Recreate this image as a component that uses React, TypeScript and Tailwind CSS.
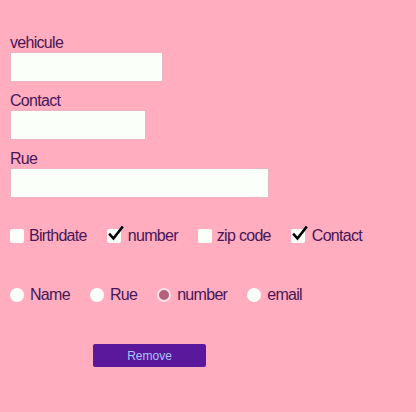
import React from "react";

const Check = () => (
  <svg
    className="absolute left-[1px] top-[-3px]"
    width="16"
    height="16"
    viewBox="0 0 16 16"
    fill="none"
  >
    <path d="M2 8.5 L5.5 12.5 L14 1.5" stroke="#000" strokeWidth="2.6" strokeLinecap="square" />
  </svg>
);

const Box = ({ label, checked }: { label: string; checked?: boolean }) => (
  <label className="flex items-center">
    <span
      className={`relative w-[14px] h-[14px] bg-[#fbfffa] rounded-[2px] ${
        checked ? "mr-[7px]" : "mr-[5px]"
      }`}
    >
      {checked && <Check />}
    </span>
    <span>{label}</span>
  </label>
);

const Radio = ({ label, checked }: { label: string; checked?: boolean }) => (
  <label className="flex items-center">
    <span
      className={`w-[14px] h-[14px] rounded-full mr-[6px] ${
        checked ? "bg-[#b5617c] border-2 border-[#f6e2e8]" : "bg-[#fbfffa]"
      }`}
    ></span>
    <span>{label}</span>
  </label>
);

export default function App() {
  return (
    <div
      className="w-[416px] h-[412px] bg-[#ffadbf] text-[#4a1656] text-[16px] tracking-[-0.7px] pl-[10px] pt-[33px]"
      style={{ fontFamily: '"Liberation Sans", Arial, sans-serif' }}
    >
      <div className="leading-[19px]">vehicule</div>
      <input className="block w-[153px] h-[30px] bg-[#fbfffa] border border-[#e9b5c2] outline-none" />
      <div className="leading-[19px] mt-[9px]">Contact</div>
      <input className="block w-[136px] h-[30px] bg-[#fbfffa] border border-[#e9b5c2] outline-none" />
      <div className="leading-[19px] mt-[9px]">Rue</div>
      <input className="block w-[259px] h-[30px] bg-[#fbfffa] border border-[#e9b5c2] outline-none" />

      <div className="flex items-center gap-[20px] mt-[29px] leading-[18px]">
        <Box label="Birthdate" />
        <Box label="number" checked />
        <Box label="zip code" />
        <Box label="Contact" checked />
      </div>

      <div className="flex items-center gap-[20px] mt-[41px] leading-[18px]">
        <Radio label="Name" />
        <Radio label="Rue" />
        <Radio label="number" checked />
        <Radio label="email" />
      </div>

      <button className="block ml-[83px] mt-[40px] w-[113px] h-[23px] bg-[#5a189c] rounded-[2px] text-[#a9c4ff] text-[12px] tracking-normal">
        Remove
      </button>
    </div>
  );
}
